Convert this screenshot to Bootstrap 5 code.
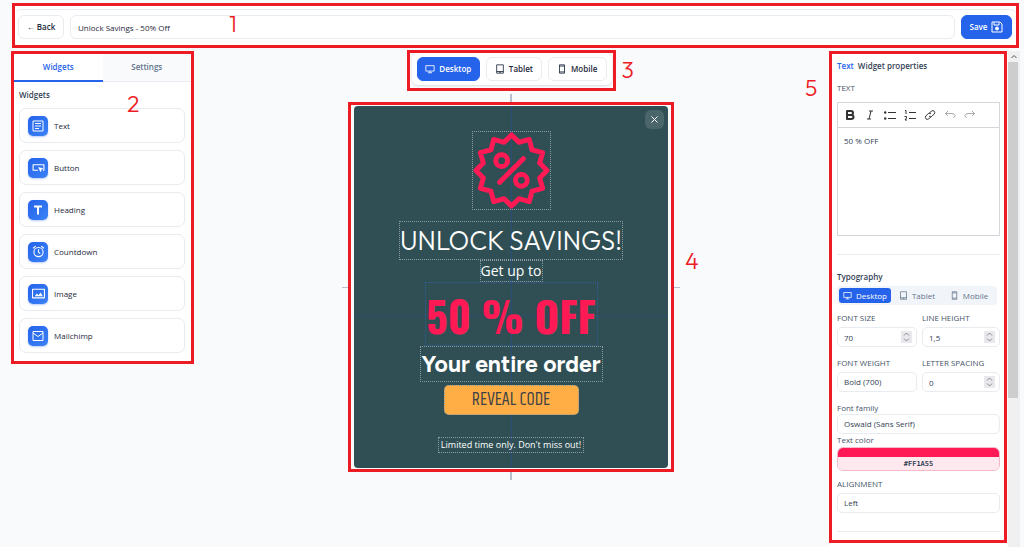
<!DOCTYPE html>
<html lang="en">
<head>
<meta charset="utf-8">
<meta name="viewport" content="width=device-width, initial-scale=1">
<title>Popup editor</title>
<link href="https://cdn.jsdelivr.net/npm/bootstrap@5.3.0/dist/css/bootstrap.min.css" rel="stylesheet">
<style>
:root{--blue:#2563eb;--ink:#334155;--line:#e8ebef;--red:#ed1c24}
body{background:#f8fafc;font-family:"Open Sans","Noto Sans",sans-serif;font-size:8px;line-height:12px;color:var(--ink)}
svg{display:block;flex:none;fill:none;stroke:currentColor;stroke-width:2;stroke-linejoin:round}
button{font-family:inherit}
.callout{border:3px solid var(--red);position:relative}
.num{position:absolute;color:var(--red);font:300 23px/20px Outfit,Inter,sans-serif;z-index:3}
.field{font-size:8px;line-height:12px;min-height:0;height:20px;padding:0 6px;border:1px solid var(--line);border-radius:5px;color:var(--ink);background:#fff none}
.ctl{font-size:8px;line-height:12px;height:24px;padding:0;border-radius:6px;border:1px solid var(--line);background:#fff;color:#1e293b;font-weight:600;display:flex;align-items:center;justify-content:center;gap:4px}
.ctl.active,.ctl.save{background:var(--blue);border-color:var(--blue);color:#fff}
.top{margin:3px 5px 0 12px;padding:3px 0 0}
.topbar{padding:5px 4px 6px 3px;gap:6px;border-top:1px solid var(--line);border-radius:6px}
.topbar .field{height:24px;padding:0 7px;border-radius:6px;color:#1e293b}
.back{flex:0 0 46px}.save{flex:0 0 51px}
.editor{margin-top:3px}
.left{width:183px;margin-left:11px}
.tab{flex:1;height:28px;border:0;border-bottom:1px solid var(--line);background:#f8fafc;color:#64748b;font-weight:600;padding:0 0 2px}
.tab.on{background:#fff;color:var(--blue);border-bottom:2px solid var(--blue);padding-bottom:1px}
.widgets{padding:7px 6px 8px 5px}
.widgets h2,.props h2{font-size:8px;line-height:12px;font-weight:600;margin-bottom:0}
.wlist{gap:7px;margin-top:7px}
.witem{height:35px;border:1px solid var(--line);border-radius:7px;background:#fff;padding:0 8px;gap:6px;color:#1e293b}
.wicon{width:20px;height:20px;border-radius:5px;background:linear-gradient(135deg,#2563eb,#3b82f6);color:#fff;box-shadow:0 1px 2px #2563eb55;display:grid;place-items:center}
.canvas{padding-right:1px}
.devices{margin-top:-1px;width:209px;padding:0 1px 3px 2px;background:#f8fafc}
.devbar{background:#fff;border-radius:6px;padding:4px 5px;gap:6px;box-shadow:0 1px 2px #0f172a22}
.stage{margin-top:11px;width:326px;padding:1px 3px;background:#f8fafc}
.vline,.hline,.gv,.gh{position:absolute;background:#b5bfce}
.vline{width:2px;left:calc(50% - 1px);top:-11px;bottom:-11px;z-index:-1}
.hline{height:1px;left:-9px;right:-9px;top:50%;z-index:-1}
.gv{width:1px;left:50%;top:0;bottom:0;background:#2b4d78}
.gh{height:1px;left:0;right:0;top:209px;background:#2c4d6c}
.popup{background:#304f54;border-radius:4px;color:#fff;padding:25px 0 15px;position:relative}
.popup>.dot{border:1px dotted #8a9c9f;position:relative;white-space:nowrap;text-align:center;margin:0}
.close-x{position:absolute;right:4px;top:4px;width:19px;height:19px;border-radius:6px;border:0;background:#4b666b;color:#fff;padding:0;display:grid;place-items:center}
.seal{width:79px;height:79px;color:#ff1a55}
.popup>.t-head{font:300 26px/37px Outfit,Lato,sans-serif;margin-top:11px;width:224px}
.t-get{font-size:14px;line-height:20px;width:63px}
.popup>.t-off{font:700 42px/64px Oswald,Roboto,sans-serif;height:64px;color:#ff1a55;width:173px;border-color:#2c5f9b}
.popup>.t-ord{font:700 23px/34px Figtree,Lato,sans-serif;width:183px}
.popup>.t-btn{font:400 18px/28px Khand,Roboto,sans-serif;height:30px;width:135px;background:#ffae45;color:#3b4145;border-radius:5px;margin-top:3px;padding:0}
.popup>.t-lim{font-size:9px;line-height:14px;width:146px;margin-top:22px}
.rightcol{width:191px}
.panel{background:#fff;width:178px}
.props{padding:6px 4px 8px 5px}
.props .lab{display:block;font-size:8px;line-height:12px;color:#475569}
.rte{margin-top:8px;border:1px solid #d3d7dc;height:134px}
.rtebar{height:25px;border-bottom:1px solid #d3d7dc;padding:0 6px;gap:8px;color:#333}
.rtebar button{border:0;background:none;padding:0;width:12px;height:12px;color:inherit}
.rtebar button:disabled{color:#a9a9a9}
.rte textarea{border:0;resize:none;outline:0;width:100%;padding:7px 6px;color:var(--ink);line-height:12px;flex:1}
.rule{height:1px;background:var(--line)}
.seg{background:#f1f5f9;border-radius:4px;width:160px;height:19px;padding:2px;margin-top:3px}
.seg button{border:0;background:none;border-radius:3px;height:15px;flex:1 1 0;padding:0;gap:4px;color:#64748b;font-weight:500}
.seg .on{background:var(--blue);color:#fff}
.pair{display:grid;grid-template-columns:80px 1fr;gap:0 5px}
.spin{position:absolute;right:5px;top:4px;width:11px;height:12px;background:#e9e9ed;color:#8a8a92;stroke-width:1}
.g3{margin-top:3px}.g7{margin-top:7px}.g10{margin-top:10px}.g16{margin-top:16px}.g18{margin-top:18px}
.swatch{border:1px solid #f6b9c9;border-radius:6px;overflow:hidden;height:24px;margin-top:1px}
.swatch input{display:block;width:100%;border:0;padding:0;margin:0}
.swatch [type=color]{height:9px;background:#ff1a55;-webkit-appearance:none;appearance:none}
.swatch [type=color]::-webkit-color-swatch-wrapper{padding:0}
.swatch [type=color]::-webkit-color-swatch{border:0;border-radius:0}
.swatch [type=text]{height:13px;background:#ffe8ee;text-align:center;font:700 7px/12px "DejaVu Sans Mono",monospace;color:var(--ink)}
.scroller{width:12px;background:#f0f0f0}
.scroller .thumb{height:336px;background:#cdcdcd;width:10px}
.scroller .arrow{height:11px;display:grid;place-items:center;color:#555}
</style>
</head>
<body class="min-vh-100 d-flex flex-column">
<svg width="0" height="0" class="position-absolute" aria-hidden="true">
<symbol id="desk" viewBox="0 0 24 24"><path d="M2 4h20v13H2zM12 17v4M7 21h10"/></symbol>
<symbol id="tab" viewBox="0 0 24 24"><path d="M4 2h16v20H4zM4 18h16M10 20h4"/></symbol>
<symbol id="mob" viewBox="0 0 24 24"><path d="M6 2h12v20H6zM6 5h12M6 19h12"/></symbol>
<symbol id="updown" viewBox="0 0 11 12"><path d="M3 4.500 5.500 2 8 4.500M3 7.500 5.500 10 8 7.500"/></symbol>
</svg>

<header class="callout top bg-white">
  <div class="topbar d-flex align-items-center">
    <button class="ctl back" type="button">← Back</button>
    <input class="form-control field" aria-label="Campaign name" value="Unlock Savings - 50% Off">
    <button class="ctl save" type="button">Save <svg width="12" height="12" viewBox="0 0 24 24"><path d="M2 2h16l4 4v16H2zM6 3v5h10V3"/><circle cx="12" cy="15" r="3" fill="currentColor"/></svg></button>
  </div>
  <span class="num" style="left:214px;top:8px">1</span>
</header>

<main class="editor d-flex flex-grow-1 align-items-start">
  <aside class="left callout bg-white">
    <div class="d-flex" role="tablist">
      <button class="tab on" role="tab" type="button">Widgets</button>
      <button class="tab" role="tab" type="button">Settings</button>
    </div>
    <div class="widgets">
      <h2>Widgets</h2>
      <div class="wlist d-flex flex-column">
        <button type="button" class="witem d-flex align-items-center"><span class="wicon"><svg width="12" height="12" viewBox="0 0 24 24"><path d="M2 2h20v20H2zM6 7h12M6 12h12M6 17h8"/></svg></span>Text</button>
        <button type="button" class="witem d-flex align-items-center"><span class="wicon"><svg width="13" height="13" viewBox="0 0 24 24"><path d="M11 17H2V7h20v10h-2"/><path d="M12 12l8 2-3 2-1 4z" fill="currentColor" stroke-width="1"/></svg></span>Button</button>
        <button type="button" class="witem d-flex align-items-center"><span class="wicon"><svg width="12" height="12" viewBox="0 0 24 24"><path d="M4 5h16M12 5v16" style="stroke-width:4"/></svg></span>Heading</button>
        <button type="button" class="witem d-flex align-items-center"><span class="wicon"><svg width="13" height="13" viewBox="0 0 24 24"><circle cx="12" cy="13" r="8.500"/><path d="M12 8v5l3 3M2 6l5-4M22 6l-5-4"/></svg></span>Countdown</button>
        <button type="button" class="witem d-flex align-items-center"><span class="wicon"><svg width="13" height="13" viewBox="0 0 24 24"><path d="M1 4h22v16H1z"/><path d="M5 17l4-5 3 3 4-5 4 7z" fill="currentColor" stroke="none"/></svg></span>Image</button>
        <button type="button" class="witem d-flex align-items-center"><span class="wicon"><svg width="12" height="12" viewBox="0 0 24 24"><path d="M2 3h20v18H2zM2 6l10 7 10-7"/></svg></span>Mailchimp</button>
      </div>
    </div>
    <span class="num" style="left:113px;top:40px">2</span>
  </aside>

  <section class="canvas flex-grow-1 d-flex flex-column align-items-center">
    <div class="callout devices">
      <div class="devbar d-flex">
        <button type="button" class="ctl active" style="flex:63"><svg width="10" height="10"><use href="#desk"/></svg>Desktop</button>
        <button type="button" class="ctl" style="flex:55"><svg width="10" height="10"><use href="#tab"/></svg>Tablet</button>
        <button type="button" class="ctl" style="flex:58"><svg width="10" height="10"><use href="#mob"/></svg>Mobile</button>
      </div>
      <span class="num" style="left:212px;top:7px">3</span>
    </div>
    <div class="stage-wrap position-relative z-0">
      <div class="callout stage">
        <div class="popup d-flex flex-column align-items-center">
          <span class="gv"></span><span class="gh"></span>
          <button class="close-x" type="button" aria-label="Close"><svg width="7" height="7" viewBox="0 0 14 14"><path d="M1 1l12 12M13 1 1 13"/></svg></button>
          <div class="dot seal"><svg width="77" height="77" viewBox="-39 -39 78 78"><path style="stroke-width:5" d="M0-36 7.500-28.500 18-31.500 20.800-20.800 31.500-18 28.500-7.500 36 0 28.500 7.500 31.500 18 20.800 20.800 18 31.500 7.500 28.500 0 36-7.500 28.500-18 31.500-20.800 20.800-31.500 18-28.500 7.500-36 0-28.500-7.500-31.500-18-20.800-20.800-18-31.500-7.500-28.500z"/><path style="stroke-width:5" stroke-linecap="round" d="M12-12-12 12"/><g style="stroke-width:5"><circle cx="-10" cy="-10" r="6"/><circle cx="10" cy="10" r="6"/></g></svg></div>
          <h1 class="dot t-head">UNLOCK SAVINGS!</h1>
          <p class="dot t-get">Get up to</p>
          <p class="dot t-off">50 % OFF</p>
          <p class="dot t-ord">Your entire order</p>
          <button type="button" class="dot t-btn">REVEAL CODE</button>
          <p class="dot t-lim">Limited time only. Don't miss out!</p>
        </div>
        <span class="vline"></span><span class="hline"></span>
        <span class="num" style="left:334px;top:146px">4</span>
      </div>
    </div>
  </section>

  <aside class="rightcol d-flex align-self-stretch me-1">
    <div class="panel">
      <div class="callout props">
        <span class="num" style="left:-27px;top:24px">5</span>
        <h2><span style="color:var(--blue)">Text</span>&nbsp; Widget properties</h2>
        <label class="lab g10" for="body">TEXT</label>
        <div class="rte d-flex flex-column">
          <div class="rtebar d-flex align-items-center">
            <button type="button" aria-label="Bold"><svg width="12" height="12" viewBox="0 0 12 12"><path style="stroke-width:2" d="M3 2h4q2 0 2 2T7 6H3zM3 6h4q2.500 0 2.500 2T7 10H3z"/></svg></button>
            <button type="button" aria-label="Italic"><svg width="12" height="12" viewBox="0 0 12 12"><path style="stroke-width:1" d="M5 2h4M3 10h4M7 2 5 10"/></svg></button>
            <button type="button" aria-label="Bulleted list"><svg width="12" height="12" viewBox="0 0 12 12"><path style="stroke-width:1" d="M4 3.500h8M4 9.500h8"/><g fill="currentColor" stroke="none"><circle cx="1.200" cy="3.500" r="1.200"/><circle cx="1.200" cy="9.500" r="1.200"/></g></svg></button>
            <button type="button" aria-label="Numbered list"><svg width="12" height="12" viewBox="0 0 12 12"><path style="stroke-width:1" d="M5 3.500h7M5 9.500h7M1 1.500h1v3.500M.5 7.500h2v1.500l-1.500 2h2"/></svg></button>
            <button type="button" aria-label="Link"><svg width="12" height="12" viewBox="0 0 12 12"><path style="stroke-width:1" d="M5 4.500 7.500 2q1.500-1 2.700.2T10.200 5L7.700 7.500Q6 8.500 5 7M7 5Q6 3.500 4.300 4.500L1.800 7q-1 1.600.2 2.800t2.700.2L7 7.700"/></svg></button>
            <button type="button" aria-label="Undo" disabled><svg width="12" height="12" viewBox="0 0 12 12"><path style="stroke-width:1" d="M4 2 1.500 4.500 4 7M1.500 4.500H8q3 .5 3 2t-2 2.500"/></svg></button>
            <button type="button" aria-label="Redo" disabled><svg width="12" height="12" viewBox="0 0 12 12"><path style="stroke-width:1" d="M8 2l2.500 2.500L8 7M10.500 4.500H4q-3 .5-3 2t2 2.500"/></svg></button>
          </div>
          <textarea id="body">50 % OFF</textarea>
        </div>
        <div class="rule g18"></div>
        <h2 class="g16">Typography</h2>
        <div class="seg d-flex">
          <button type="button" class="on d-flex align-items-center justify-content-center"><svg width="9" height="9"><use href="#desk"/></svg>Desktop</button>
          <button type="button" class="d-flex align-items-center justify-content-center"><svg width="9" height="9"><use href="#tab"/></svg>Tablet</button>
          <button type="button" class="d-flex align-items-center justify-content-center"><svg width="9" height="9"><use href="#mob"/></svg>Mobile</button>
        </div>
        <div class="pair g7">
          <label class="lab" for="fs">FONT SIZE</label><label class="lab" for="lh">LINE HEIGHT</label>
          <div class="position-relative g3"><input id="fs" class="form-control field" inputmode="decimal" value="70"><svg class="spin"><use href="#updown"/></svg></div>
          <div class="position-relative g3"><input id="lh" class="form-control field" inputmode="decimal" value="1,5"><svg class="spin"><use href="#updown"/></svg></div>
        </div>
        <div class="pair g10">
          <label class="lab" for="fw">FONT WEIGHT</label><label class="lab" for="ls">LETTER SPACING</label>
          <div class="g3"><select id="fw" class="form-select field"><option>Bold (700)</option></select></div>
          <div class="position-relative g3"><input id="ls" class="form-control field" inputmode="decimal" value="0"><svg class="spin"><use href="#updown"/></svg></div>
        </div>
        <label class="lab g10" for="ff">Font family</label>
        <select id="ff" class="form-select field"><option>Oswald (Sans Serif)</option></select>
        <label class="lab" for="tc">Text color</label>
        <div class="swatch"><input type="color" id="tc" value="#ff1a55"><input type="text" aria-label="Hex color" value="#FF1A55"></div>
        <label class="lab g7" for="al">ALIGNMENT</label>
        <select id="al" class="form-select field g3"><option>Left</option></select>
        <div class="rule g18"></div>
      </div>
    </div>
    <div class="scroller ms-auto" aria-hidden="true">
      <div class="arrow"><svg width="6" height="5" viewBox="0 0 6 5"><path style="stroke-width:1" d="M.5 4 3 1.500 5.500 4"/></svg></div>
      <div class="thumb"></div>
    </div>
  </aside>
</main>
<script src="https://cdn.jsdelivr.net/npm/bootstrap@5.3.0/dist/js/bootstrap.bundle.min.js"></script>
</body>
</html>
